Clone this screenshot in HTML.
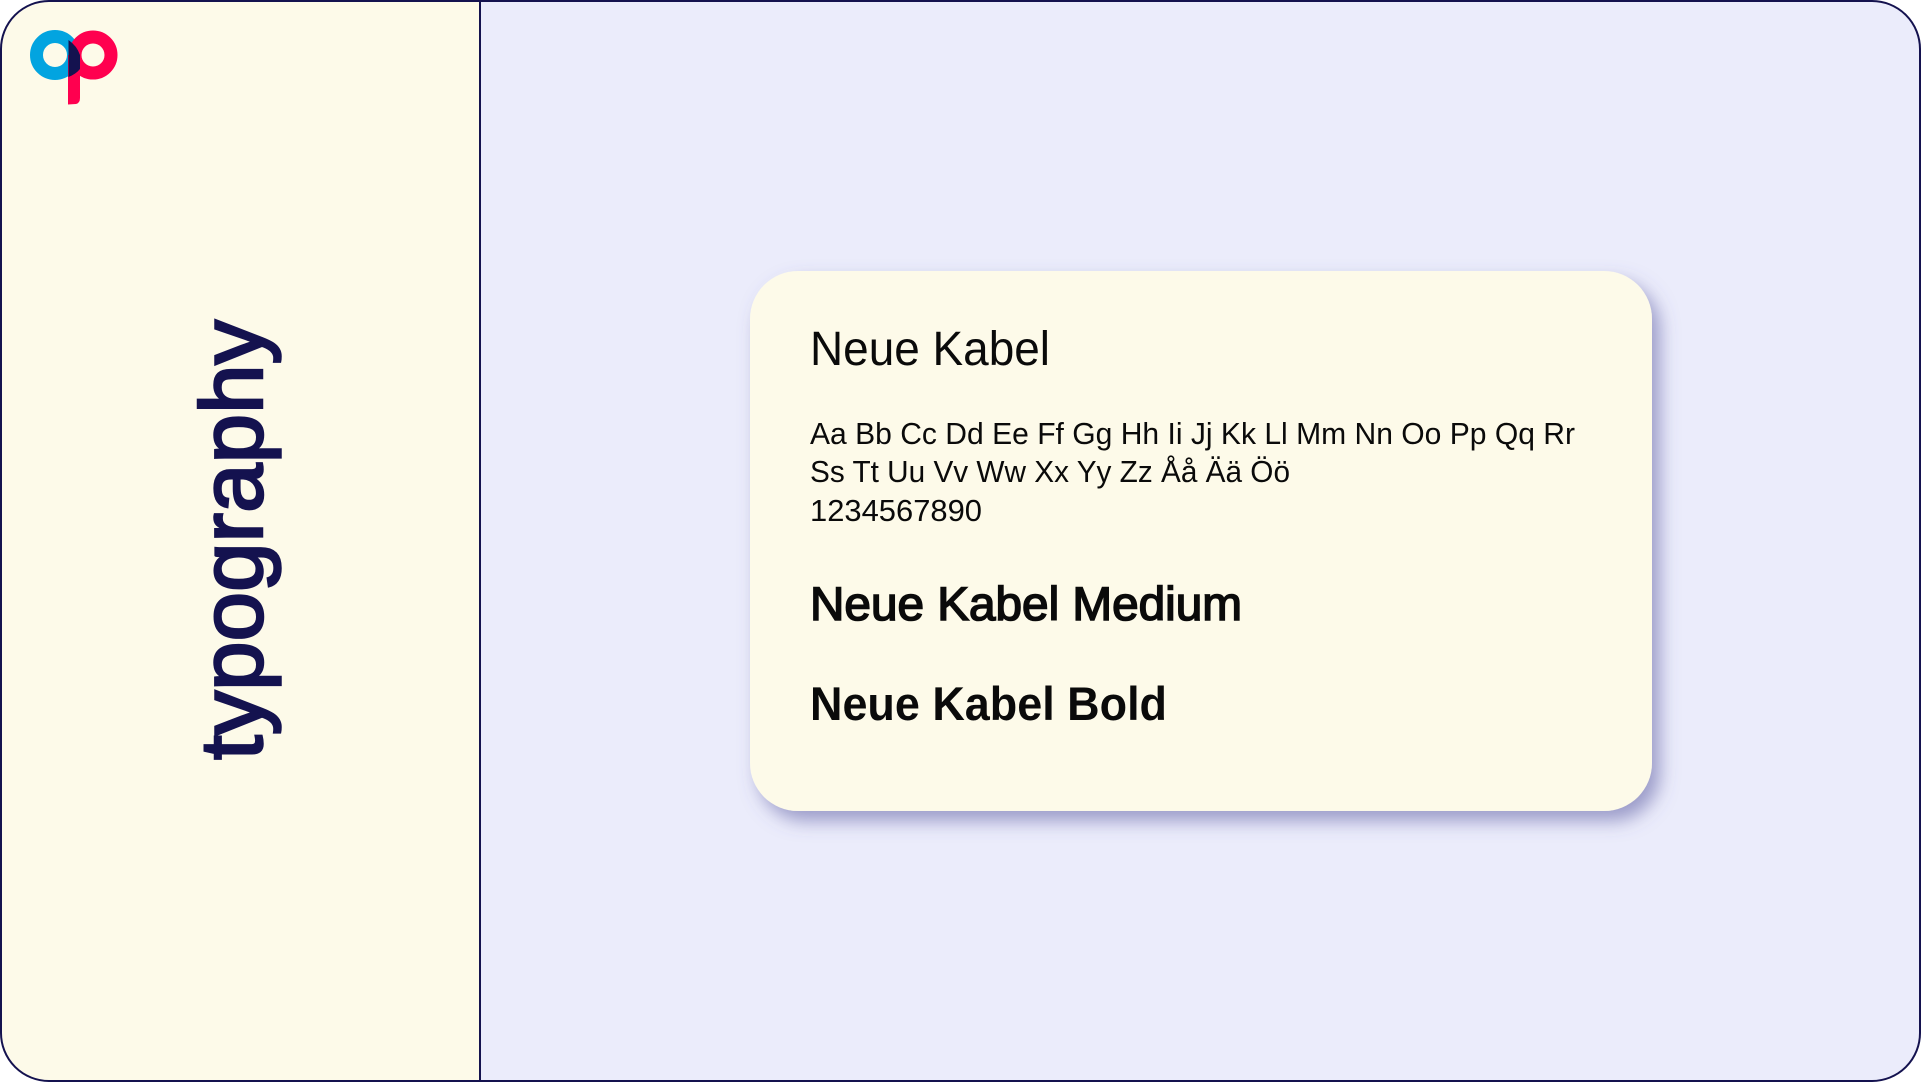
<!DOCTYPE html>
<html><head><meta charset="utf-8"><style>
html,body{margin:0;padding:0;width:1922px;height:1083px;overflow:hidden;background:#fff}
</style></head><body>
<svg width="1922" height="1083" viewBox="0 0 1922 1083" xmlns="http://www.w3.org/2000/svg" style="display:block">
<defs>
<clipPath id="frame"><rect x="1" y="1" width="1919" height="1080" rx="48"/></clipPath>
<filter id="sh" x="-10%" y="-10%" width="130%" height="130%">
<feDropShadow dx="8" dy="10" stdDeviation="9" flood-color="#5a5aa0" flood-opacity="0.55"/>
</filter>
</defs>
<g clip-path="url(#frame)">
<rect x="0" y="0" width="1922" height="1083" fill="#ebecfb"/>
<rect x="0" y="0" width="480" height="1083" fill="#fdfae9"/>
<rect x="479" y="0" width="2" height="1083" fill="#14124f"/>
</g>
<rect x="1" y="1" width="1919" height="1080" rx="48" fill="none" stroke="#14124f" stroke-width="2"/>
<!-- logo -->
<circle cx="55" cy="55" r="18.5" fill="none" stroke="#02a4e0" stroke-width="13"/>
<path d="M68 55 L68 104.5 L76 104 Q80 103 80 98 L80 55 Z" fill="#ff004f"/>
<circle cx="93" cy="55" r="18" fill="none" stroke="#ff004f" stroke-width="13"/>
<path d="M68.5 40 Q77 46 80 55 L80 69 Q76 74 68.5 77 Z" fill="#14124f"/>
<text transform="translate(262,760) rotate(-90)" font-family="Liberation Sans, sans-serif" font-size="88" fill="#14124f" stroke="#14124f" stroke-width="2.5" textLength="440" lengthAdjust="spacingAndGlyphs">typography</text>
<!-- card -->
<rect x="750" y="271" width="902" height="540" rx="48" fill="#fdfae9" filter="url(#sh)"/>
<g font-family="Liberation Sans, sans-serif" fill="#0a0a0a">
<text x="810" y="365" font-size="48" textLength="240" lengthAdjust="spacingAndGlyphs">Neue Kabel</text>
<text x="810" y="444" font-size="31" textLength="765" lengthAdjust="spacingAndGlyphs">Aa Bb Cc Dd Ee Ff Gg Hh Ii Jj Kk Ll Mm Nn Oo Pp Qq Rr</text>
<text x="810" y="482" font-size="31" textLength="480" lengthAdjust="spacingAndGlyphs">Ss Tt Uu Vv Ww Xx Yy Zz Åå Ää Öö</text>
<text x="810" y="521" font-size="31" textLength="172" lengthAdjust="spacingAndGlyphs">1234567890</text>
<text x="810" y="620" font-size="47" textLength="432" lengthAdjust="spacingAndGlyphs" stroke="#0a0a0a" stroke-width="1.6">Neue Kabel Medium</text>
<text x="810" y="720" font-size="47" font-weight="bold" textLength="357" lengthAdjust="spacingAndGlyphs">Neue Kabel Bold</text>
</g>
</svg>
</body></html>
